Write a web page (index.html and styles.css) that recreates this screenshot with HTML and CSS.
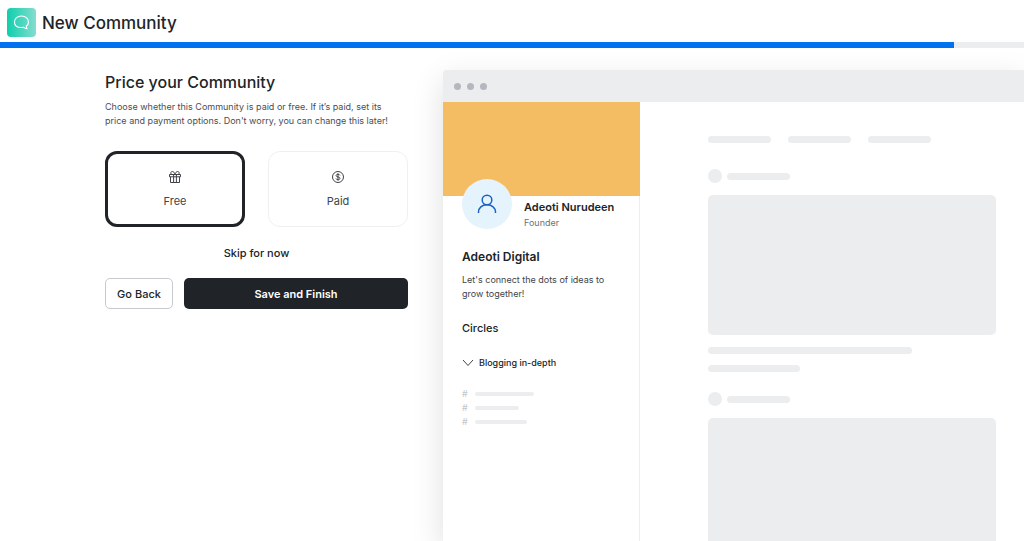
FILE: index.html
```html
<!DOCTYPE html>
<html lang="en">
<head>
<meta charset="utf-8">
<meta name="viewport" content="width=device-width, initial-scale=1">
<title>New Community</title>
<link rel="stylesheet" href="styles.css">
</head>
<body>
<div class="page">
  <header class="topbar">
    <svg class="logo" viewBox="0 0 29 29" aria-hidden="true">
      <defs><linearGradient id="mint" x1="0" y1="0" x2="1" y2="0"><stop offset="0" stop-color="#0dcfad"/><stop offset="1" stop-color="#86dccf"/></linearGradient></defs>
      <rect width="29" height="29" rx="4" fill="url(#mint)"/>
      <path d="M19.300 18.300C20.700 17.200 21.500 15.700 21.500 14C21.500 10.500 18.400 8 14.500 8S7.500 10.500 7.500 14S10.400 19.500 14.200 19.500C15 19.500 15.700 19.400 16.400 19.200C17.500 20.200 18.700 20.700 20.200 20.800C19.500 20 19.200 19.200 19.300 18.300Z" fill="none" stroke="#fff" stroke-width="1.100" stroke-linejoin="round"/>
    </svg>
    <h1 class="topbar-title">New Community</h1>
  </header>
  <div class="progress" role="progressbar" aria-label="Setup progress" aria-valuenow="93" aria-valuemin="0" aria-valuemax="100"><div class="progress-fill"></div></div>

  <main class="main">
    <form class="setup">
      <h2 class="setup-title">Price your Community</h2>
      <p class="setup-text">Choose whether this Community is paid or free. If it’s paid, set its price and payment options. Don't worry, you can change this later!</p>
      <div class="options">
        <label class="option">
          <input class="option-input" type="radio" name="price" value="free" checked>
          <svg class="option-icon" viewBox="0 0 14 14" aria-hidden="true"><path d="M1.500 4.500h11v2.300h-11zM2.500 6.800v5.700h9V6.800M5.600 4.500v8M8.400 4.500v8M7 4.500C6.500 2.500 5.500 1.500 4.300 1.500C2.300 1.500 2.300 4.500 4.300 4.500M7 4.500C7.500 2.500 8.500 1.500 9.700 1.500C11.700 1.500 11.700 4.500 9.700 4.500"/></svg>
          <span>Free</span>
        </label>
        <label class="option">
          <input class="option-input" type="radio" name="price" value="paid">
          <svg class="option-icon" viewBox="0 0 14 14" aria-hidden="true"><circle cx="7" cy="7" r="5.500"/><path d="M9 5.400C8.700 4.600 8 4.300 7 4.300C5.800 4.300 5.100 4.800 5.100 5.600C5.100 7.500 9 6.400 9 8.400C9 9.300 8.100 9.700 7 9.700C5.900 9.700 5.200 9.300 5 8.500M7 3.300v7.400"/></svg>
          <span>Paid</span>
        </label>
      </div>
      <button class="skip" type="button">Skip for now</button>
      <div class="actions">
        <button class="btn btn-outline" type="button">Go Back</button>
        <button class="btn btn-solid" type="submit">Save and Finish</button>
      </div>
    </form>

    <section class="preview" aria-label="Community preview">
      <div class="window-bar"><i class="dot"></i><i class="dot"></i><i class="dot"></i></div>
      <div class="window-body">
        <aside class="sidebar">
          <div class="cover"></div>
          <div class="sidebar-body">
            <div class="owner">
              <div class="avatar">
                <svg class="avatar-icon" viewBox="0 0 20 20" aria-hidden="true"><circle cx="10" cy="6" r="4.800"/><path d="M1.500 19V18C1.500 13.800 5 10.800 10 10.800S18.500 13.800 18.500 18V19"/></svg>
              </div>
              <div class="owner-text">
                <p class="owner-name">Adeoti Nurudeen</p>
                <p class="owner-role">Founder</p>
              </div>
            </div>
            <h3 class="community">Adeoti Digital</h3>
            <p class="tagline">Let's connect the dots of ideas to grow together!</p>
            <h4 class="circles">Circles</h4>
            <div class="circle-group">
              <svg class="chevron" viewBox="0 0 12 8" aria-hidden="true"><path d="M1 1l5 5.500L11 1"/></svg>
              <span>Blogging in-depth</span>
            </div>
            <ul class="channels">
              <li class="channel">#<i class="line line-a"></i></li>
              <li class="channel">#<i class="line line-b"></i></li>
              <li class="channel">#<i class="line line-c"></i></li>
            </ul>
          </div>
        </aside>
        <div class="feed">
          <div class="tabs"><i class="bar"></i><i class="bar"></i><i class="bar"></i></div>
          <article class="post">
            <div class="author"><i class="face"></i><i class="bar"></i></div>
            <div class="media"></div>
            <div class="bar bar-long"></div>
            <div class="bar bar-mid"></div>
          </article>
          <article class="post">
            <div class="author"><i class="face"></i><i class="bar"></i></div>
            <div class="media"></div>
          </article>
        </div>
      </div>
    </section>
  </main>
</div>
</body>
</html>
```
FILE: styles.css
```css
* { box-sizing: border-box; margin: 0; padding: 0; }
body { font-family: Inter, "Liberation Sans", sans-serif; color: #202428; background: #fff; }
button { font: inherit; color: inherit; cursor: pointer; }

.page { display: flex; flex-direction: column; height: 100vh; overflow: hidden; }
.topbar { display: flex; align-items: center; gap: 6px; padding: 8px 7px 5px; }
.logo { width: 29px; height: 29px; }
.topbar-title { font-size: 17px; line-height: 24px; font-weight: 500; }
.progress { flex: none; height: 6px; background: #ebedef; }
.progress-fill { width: 93.2%; height: 100%; background: #0072f0; }

.main { display: flex; flex: 1; gap: 35px; min-height: 0; padding: 22px 0 0 105px; }
.setup { width: 303px; flex: none; }
.setup-title { font-size: 16px; line-height: 24px; font-weight: 500; }
.setup-text { margin-top: 6px; padding-right: 12px; font-size: 9px; line-height: 14px; color: #4a4e54; }
.options { display: grid; grid-template-columns: 1fr 1fr; gap: 23px; margin-top: 23px; }
.option { position: relative; display: flex; flex-direction: column; align-items: center; gap: 9px; height: 76px; padding-top: 18px; border: 1px solid #eff0f2; border-radius: 12px; font-size: 11px; line-height: 16px; color: #404449; cursor: pointer; }
.option:has(:checked) { padding-top: 16px; border: 3px solid #202428; }
.option-input { position: absolute; inset: 0; opacity: 0; }
.option-icon { width: 14px; height: 14px; fill: none; stroke: #404449; stroke-width: 1; }
.skip { display: block; margin: 18px auto 17px; border: 0; background: none; font-size: 11px; line-height: 16px; font-weight: 500; }
.actions { display: flex; gap: 11px; }
.btn { height: 31px; border-radius: 5px; font-size: 11px; font-weight: 500; }
.btn-outline { width: 68px; border: 1px solid #c6c9ce; background: #fff; }
.btn-solid { flex: 1; border: 0; background: #202428; color: #fff; font-weight: 600; }

.preview { display: flex; flex-direction: column; flex: 1; min-width: 0; border-top-left-radius: 3px; background: #fff; box-shadow: 0 10px 32px rgba(0, 0, 0, 0.13); }
.window-bar { display: flex; align-items: center; gap: 6px; flex: none; height: 32px; padding-left: 11px; border-top-left-radius: 3px; background: #ebedef; }
.dot { width: 7px; height: 7px; border-radius: 50%; background: #b4b8be; }
.window-body { display: flex; flex: 1; min-height: 0; }
.sidebar { width: 197px; flex: none; border-right: 1px solid #ebedef; }
.cover { height: 94px; margin-right: -1px; background: #f4bd63; }
.sidebar-body { padding: 0 19px; }
.owner { display: flex; gap: 12px; margin-top: -17px; }
.avatar { display: grid; place-items: center; flex: none; width: 50px; height: 50px; border-radius: 50%; background: #e5f3fd; }
.avatar-icon { width: 20px; height: 20px; fill: none; stroke: #1b62c8; stroke-width: 1.5; }
.owner-text { padding-top: 20px; white-space: nowrap; }
.owner-name { font-size: 11px; line-height: 16px; font-weight: 600; }
.owner-role { font-size: 9px; line-height: 16px; color: #6d7278; }
.community { margin-top: 18px; font-size: 12px; line-height: 16px; font-weight: 600; }
.tagline { margin-top: 8px; font-size: 9px; line-height: 14px; color: #404449; }
.circles { margin-top: 19px; font-size: 11px; line-height: 16px; font-weight: 500; }
.circle-group { display: flex; align-items: center; gap: 5px; margin-top: 20px; font-size: 9px; line-height: 14px; font-weight: 500; }
.chevron { width: 12px; height: 8px; fill: none; stroke: #404449; stroke-width: 1; }
.channels { margin-top: 17px; list-style: none; }
.channel { display: flex; align-items: center; gap: 7px; font-size: 9px; line-height: 14px; color: #c3c6ca; }
.line { height: 4px; border-radius: 2px; background: #ebedef; }
.line-a { width: 59px; }
.line-b { width: 44px; }
.line-c { width: 52px; }

.feed { flex: 1; min-width: 0; overflow: hidden; padding: 34px 28px 0 68px; }
.tabs { display: flex; gap: 17px; }
.bar { width: 63px; height: 7px; border-radius: 4px; background: #ebedef; }
.post { margin-top: 26px; }
.post + .post { margin-top: 20px; }
.author { display: flex; align-items: center; gap: 5px; }
.face { width: 14px; height: 14px; border-radius: 50%; background: #ebedef; }
.media { height: 140px; margin: 12px 0; border-radius: 5px; background: #ebedef; }
.bar-long { width: 71%; margin-bottom: 11px; }
.bar-mid { width: 32%; }
```
